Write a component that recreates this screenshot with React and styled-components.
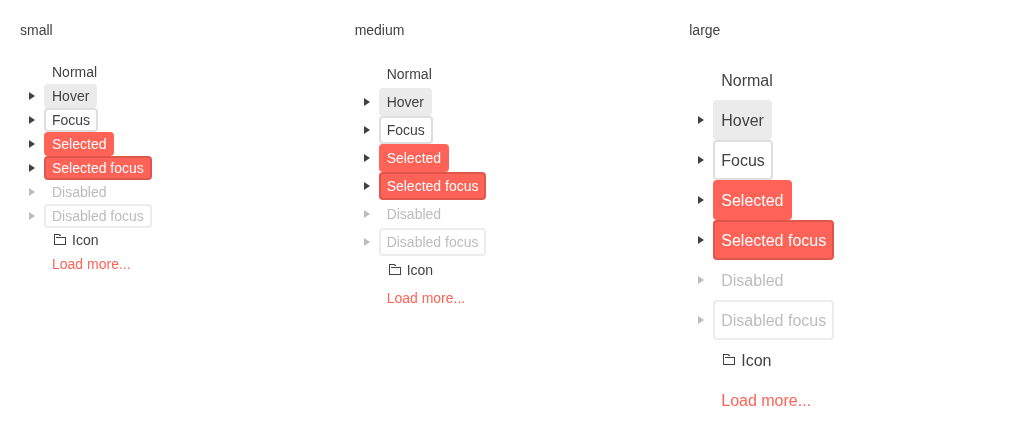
import React from "react";
import styled, { createGlobalStyle, css } from "styled-components";

const GlobalStyle = createGlobalStyle`
  body {
    margin: 0;
    background: #ffffff;
    color: #424242;
    font: 14px/20px "Liberation Sans", Arial, sans-serif;
  }
`;

const sizes = {
  small: { row: 24, font: 14, line: 20 },
  medium: { row: 28, font: 14, line: 20 },
  large: { row: 40, font: 16, line: 23 },
};

const Page = styled.main`
  display: grid;
  grid-template-columns: repeat(3, minmax(0, 1fr));
  gap: 19.9px;
  padding: 20px;
  will-change: transform;
`;

const Column = styled.section`
  display: flex;
  flex-direction: column;
  gap: 20px;
`;

const Title = styled.span``;

const Tree = styled.ul`
  list-style: none;
  margin: 0;
  padding: 0;
  font-size: ${(p) => sizes[p.$size].font}px;
  line-height: ${(p) => sizes[p.$size].line}px;
`;

const Row = styled.li`
  display: flex;
  align-items: center;
  height: ${(p) => sizes[p.$size].row}px;
  padding-left: 4px;
`;

const Toggle = styled.span`
  display: flex;
  width: 16px;
  height: 16px;
  margin-right: 4px;
  ${(p) => p.$disabled && css`color: #8f8f8f; opacity: 0.6;`}
`;

const Icon = styled.svg`
  display: block;
  width: 16px;
  height: 16px;
  fill: currentColor;
`;

const Leaf = styled.span`
  display: flex;
  align-items: center;
  gap: 4px;
  box-sizing: border-box;
  height: 100%;
  padding: 0 8px;
  border-radius: 4px;
  white-space: nowrap;
  ${(p) => p.$hover && css`background: #ebebeb;`}
  ${(p) => p.$selected && css`background: #ff6358; color: #ffffff;`}
  ${(p) => p.$focus && css`box-shadow: inset 0 0 0 2px rgba(0, 0, 0, 0.13);`}
  ${(p) => p.$disabled && css`color: #8f8f8f; opacity: 0.6;`}
  ${(p) => p.$link && css`color: #ff6358;`}
`;

const items = [
  { text: "Normal" },
  { text: "Hover", toggle: true, hover: true },
  { text: "Focus", toggle: true, focus: true },
  { text: "Selected", toggle: true, selected: true },
  { text: "Selected focus", toggle: true, selected: true, focus: true },
  { text: "Disabled", toggle: true, disabled: true },
  { text: "Disabled focus", toggle: true, disabled: true, focus: true },
  { text: "Icon", icon: true },
  { text: "Load more...", link: true },
];

function Caret() {
  return (
    <Icon viewBox="0 0 16 16">
      <path d="M5 4v8l6-4z" />
    </Icon>
  );
}

function Folder() {
  return (
    <Icon viewBox="0 0 16 16">
      <path d="M2 2h5l2 1v1H8L6.500 3H3v9h10V6H4V5h10v8H2z" />
    </Icon>
  );
}

export default function App() {
  return (
    <>
      <GlobalStyle />
      <Page>
        {Object.keys(sizes).map((size) => (
          <Column key={size}>
            <Title>{size}</Title>
            <Tree $size={size}>
              {items.map((item) => (
                <Row key={item.text} $size={size}>
                  <Toggle $disabled={item.disabled}>{item.toggle && <Caret />}</Toggle>
                  <Leaf
                    $hover={item.hover}
                    $focus={item.focus}
                    $selected={item.selected}
                    $disabled={item.disabled}
                    $link={item.link}
                  >
                    {item.icon && <Folder />}
                    {item.text}
                  </Leaf>
                </Row>
              ))}
            </Tree>
          </Column>
        ))}
      </Page>
    </>
  );
}
